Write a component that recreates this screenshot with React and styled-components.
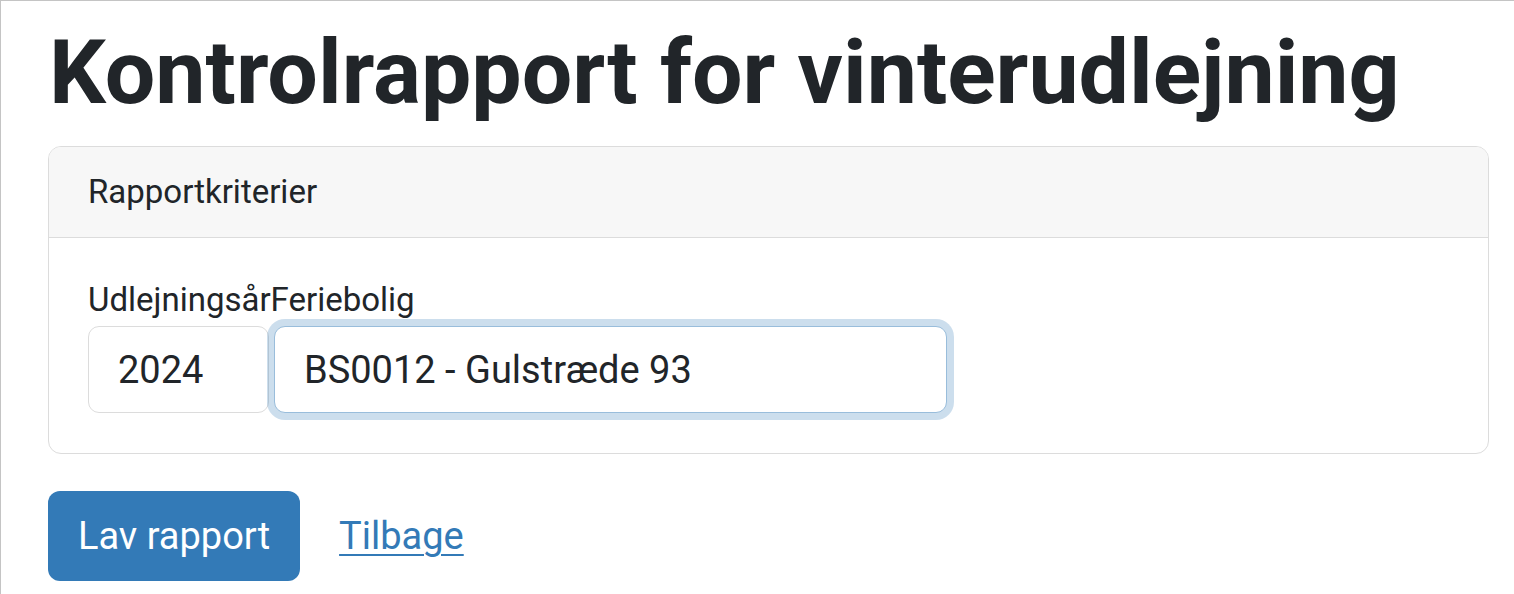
import React, { useState } from 'react';
import styled, { createGlobalStyle } from 'styled-components';

const GlobalStyle = createGlobalStyle`
  html, body {
    margin: 0;
    padding: 0;
    background: #fff;
  }
  body {
    font-family: Roboto, "Liberation Sans", Arial, sans-serif;
    color: #212529;
  }
`;

const Page = styled.div`
  box-sizing: border-box;
  min-height: 100vh;
  border-top: 1px solid #c4c4c4;
  border-left: 1px solid #c4c4c4;
  padding: 18px 25px 0 47px;
`;

const Title = styled.h1`
  margin: 0 0 20px 1px;
  font-size: 89.6px;
  font-weight: 700;
  line-height: 107px;
  color: #212529;
`;

const Card = styled.section`
  border: 1px solid #dcdcdc;
  border-radius: 13px;
  overflow: hidden;
`;

const CardHeader = styled.div`
  background: #f7f7f7;
  border-bottom: 1px solid #dcdcdc;
  padding: 20px 39px;
  font-size: 33px;
  line-height: 1.5;
`;

const CardBody = styled.div`
  padding: 42px 39px 40px;
`;

const LabelRow = styled.div`
  display: flex;
  font-size: 33px;
  line-height: 1.2;
  margin-bottom: 7px;
`;

const Label = styled.label`
  color: #212529;
`;

const InputRow = styled.div`
  display: flex;
  gap: 5px;
`;

const Input = styled.input`
  box-sizing: border-box;
  width: ${p => p.$width}px;
  height: 87px;
  padding: 0 29px;
  font-family: Roboto, "Liberation Sans", Arial, sans-serif;
  font-size: 38px;
  color: #212529;
  background: #fff;
  border: 1.5px solid ${p => (p.$focus ? '#99bddb' : '#dcdcdc')};
  border-radius: 11px;
  outline: none;
  box-shadow: ${p => (p.$focus ? '0 0 0 7px rgba(51, 122, 183, 0.25)' : 'none')};
`;

const Actions = styled.div`
  display: flex;
  align-items: center;
  gap: 39px;
  margin-top: 37px;
`;

const Button = styled.button`
  height: 90px;
  padding: 0 30px;
  background: #337ab7;
  color: #fff;
  border: none;
  border-radius: 12px;
  font-family: Roboto, "Liberation Sans", Arial, sans-serif;
  font-size: 38px;
  cursor: pointer;
`;

const BackLink = styled.a`
  color: #337ab7;
  font-size: 38px;
  text-decoration: underline;
  text-underline-offset: 5px;
  text-decoration-thickness: 2px;
`;

const App = () => {
  const [year, setYear] = useState('2024');
  const [house, setHouse] = useState('BS0012 - Gulstræde 93');

  return (
    <>
      <GlobalStyle />
      <Page>
        <Title>Kontrolrapport for vinterudlejning</Title>
        <Card>
          <CardHeader>Rapportkriterier</CardHeader>
          <CardBody>
            <LabelRow>
              <Label htmlFor="aar">Udlejningsår</Label>
              <Label htmlFor="bolig">Feriebolig</Label>
            </LabelRow>
            <InputRow>
              <Input id="aar" $width={181} value={year} onChange={e => setYear(e.target.value)} />
              <Input id="bolig" $width={673} $focus value={house} onChange={e => setHouse(e.target.value)} />
            </InputRow>
          </CardBody>
        </Card>
        <Actions>
          <Button>Lav rapport</Button>
          <BackLink href="#">Tilbage</BackLink>
        </Actions>
      </Page>
    </>
  );
};

export default App;
